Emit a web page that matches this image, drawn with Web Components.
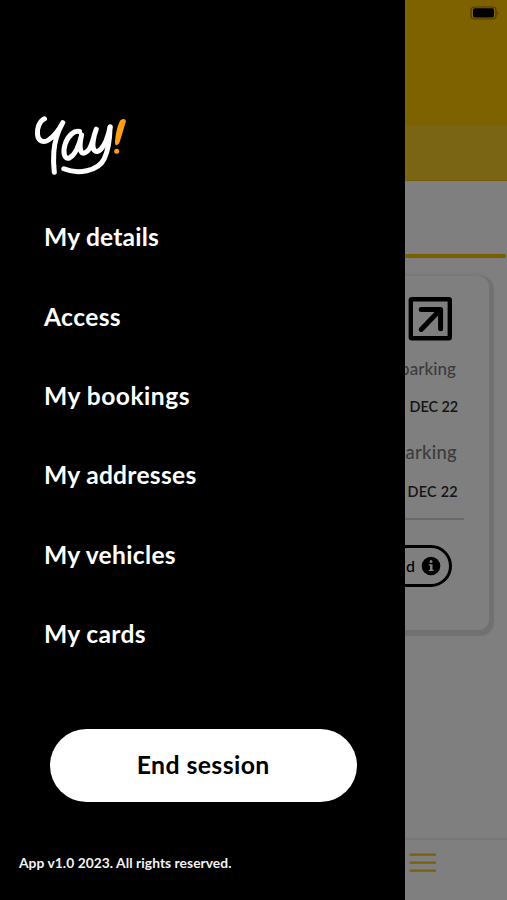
<!DOCTYPE html>
<html lang="en"><head><meta charset="utf-8"><title>Yay! menu</title>
<style>html,body{margin:0;height:900px;overflow:hidden;background:#fff;font-family:Lato,"Open Sans",sans-serif}</style></head>
<body><yay-app></yay-app>
<script>
const define=(name,html,init)=>customElements.define(name,class extends HTMLElement{
  connectedCallback(){
    if(this.shadowRoot)return;
    this.attachShadow({mode:'open'}).innerHTML=html;
    if(init)init(this);
  }
});
// One line of text whose tracking is adjusted to occupy the width in its "w" attribute.
define('fit-text',`<style>:host{display:block;white-space:pre;line-height:1}span{display:inline-block}</style><span><slot></slot></span>`,el=>{
  const s=el.shadowRoot.querySelector('span'),w=+el.getAttribute('w');
  if(w)s.style.letterSpacing=((w-s.getBoundingClientRect().width)/el.textContent.length)+'px';
});
define('yay-logo',`<style>:host{display:block;width:94px;height:62px}svg{display:block}</style>
<svg width="94" height="62" viewBox="34 115 94 62" fill="none" stroke="#fff" stroke-width="5" stroke-linecap="round" stroke-linejoin="round">
<path d="M44.5 118.8C39.5 121 36.8 128 37.5 134.5C38.2 141.5 43.5 143.2 48.5 140C54.5 136 59.5 129 62.8 122.6C57.8 131.5 54.4 143 53.8 152C53.3 159 53.6 166 54.3 172.3"/>
<path d="M79.5 131.5C74.5 130 68 135.5 65.2 144C62.7 152 64 160 69.6 157.8C75.5 154.5 79.5 144 81.6 135C80 142 79.7 148.5 81.2 151.8C83 155 87 152.5 89.6 148.5C93 142.5 93.6 136 96.3 129.2C93.4 137 91.6 146.5 94.2 150.2C97.8 154.5 103.4 147.5 106 141C108 136 109.2 132 110.1 127"/>
<path d="M110.1 127C109.8 139 108.4 150 104.2 158.8C98 171.5 77.5 174.5 63.8 168.8"/>
<path d="M120 120.8Q121.3 118.8 124 118.9Q126.3 119.5 125.7 122L119.8 141.8Q118.7 145.1 116.5 145.2Q114.8 145 115 142Q115.7 130 120 120.8Z" fill="#ff9f16" stroke="none"/>
<circle cx="116.7" cy="151.3" r="2.5" fill="#ff9f16" stroke="none"/></svg>`);
define('menu-item',`<style>:host{display:flex;height:79.4px;align-items:flex-start;font-size:24.6px;font-weight:700;color:#fff}</style><slot></slot>`);
define('pill-button',`<style>:host{display:flex;box-sizing:border-box;width:307px;height:73px;border-radius:37px;background:#fff;color:#000;align-items:center;justify-content:center;font-size:24.8px;font-weight:700}</style><slot></slot>`);
define('side-drawer',`<style>:host{display:flex;flex-direction:column;box-sizing:border-box;width:405.4px;height:900px;background:#000;padding-top:115px}
yay-logo{margin-left:34px}nav{margin:48.3px 0 0 44px;height:503.7px}pill-button{margin-left:49.7px}
.foot{margin:54px 0 0 19px;font-size:13.8px;font-weight:700;color:#f2f2f2}</style>
<yay-logo></yay-logo><nav>
<menu-item><fit-text w="115">My details</fit-text></menu-item>
<menu-item><fit-text w="77">Access</fit-text></menu-item>
<menu-item><fit-text w="146">My bookings</fit-text></menu-item>
<menu-item><fit-text w="152.5">My addresses</fit-text></menu-item>
<menu-item><fit-text w="132">My vehicles</fit-text></menu-item>
<menu-item><fit-text w="102">My cards</fit-text></menu-item></nav>
<pill-button><fit-text w="133">End session</fit-text></pill-button>
<fit-text class="foot" w="212.5">App v1.0 2023. All rights reserved.</fit-text>`);
define('battery-icon',`<style>:host{display:block;width:30px;height:14px}svg{display:block}</style><svg width="30" height="14"><rect x="1" y="1" width="25" height="12" rx="3.2" fill="none" stroke="#a86c00" stroke-width="1.2"/><rect x="3" y="2.3" width="21" height="9.2" rx="1.8" fill="#000"/><path d="M27.6 5q1.8 2 0 4z" fill="#a06800"/></svg>`);
define('booking-card',`<style>:host{display:flex;flex-direction:column;align-items:flex-end;box-sizing:border-box;width:471px;height:354px;border-radius:11px;background:#fff;padding:21px 25px 0 20px;box-shadow:2.5px 3px 1px 2.5px #e3e3e3,0 0 5px 2px #eee}
.arrow{display:block;margin-right:12px}.t{color:#777;font-weight:500}.d{color:#2a2a2a;font-weight:600;font-size:14.4px}
fit-text{margin-right:6px}.p1{font-size:17px;margin:18.5px 8px 0 0}.d1{margin-top:23.5px}.p2{font-size:18.4px;margin:29px 7px 0 0}.d2{margin-top:23.5px}
hr{width:100%;height:0;border:0;border-top:2px solid #d3d3d3;margin:18.5px 0 0}
.pill{display:flex;box-sizing:border-box;width:200px;height:42px;border:3px solid #000;border-radius:21px;margin:25px 12px 0 0;align-items:center;justify-content:flex-end;gap:6px;padding-right:8px;font-size:16px;font-weight:500}.pill fit-text{margin:0}</style>
<svg class="arrow" width="44" height="44" viewBox="0 0 44 44" fill="none" stroke="#000"><rect x="2.8" y="2.2" width="39" height="39" rx="1" stroke-width="4.4"/><path d="M13.2 12.4H32.6V31.8M13.2 32.4L31.5 13.6" stroke-width="5" stroke-linecap="round" stroke-linejoin="round"/></svg>
<fit-text class="t p1" w="56">parking</fit-text><fit-text class="d d1" w="48.5">DEC 22</fit-text>
<fit-text class="t p2" w="62">parking</fit-text><fit-text class="d d2" w="50.5">DEC 22</fit-text><hr>
<div class="pill"><fit-text>d</fit-text><svg width="20" height="20" viewBox="0 0 20 20"><circle cx="10" cy="10" r="9.3"/><circle cx="10" cy="5.5" r="1.5" fill="#fff"/><path d="M7.8 8.2H11.5V13.7H12.7V15.1H7.8V13.7H9V9.6H7.8Z" fill="#fff"/></svg></div>`);
define('booking-screen',`<style>:host{display:flex;flex-direction:column;width:507px;height:900px;background:#fff}
.head{height:125px;background:#ffc400;display:flex;justify-content:flex-end}battery-icon{margin:6px 7px 0 0}
.strip{box-sizing:border-box;height:56px;background:#f5ca28;border-bottom:1px solid #ebb800}.tabs{box-sizing:border-box;height:77px;border-bottom:4px solid #f4c300;margin-right:1px}
.body{flex:1;padding:18px 0 0 18px}.bar{box-sizing:border-box;height:62px;border-top:2px solid #ededed;padding:13px 71px 0 0;display:flex;justify-content:flex-end}</style>
<div class="head"><battery-icon></battery-icon></div><div class="strip"></div><div class="tabs"></div>
<div class="body"><booking-card></booking-card></div>
<div class="bar"><svg width="27" height="20" stroke="#f0c21c" stroke-width="2.2"><path d="M.5 1.6H27M.5 9.6H27M.5 17.6H27"/></svg></div>`);
define('yay-app',`<style>:host{display:block;position:relative;width:507px;height:900px;overflow:hidden}.scrim{position:absolute;inset:0;background:rgba(0,0,0,.5)}side-drawer{position:absolute;left:0;top:0}</style>
<booking-screen></booking-screen><div class="scrim"></div><side-drawer></side-drawer>`);
</script></body></html>
